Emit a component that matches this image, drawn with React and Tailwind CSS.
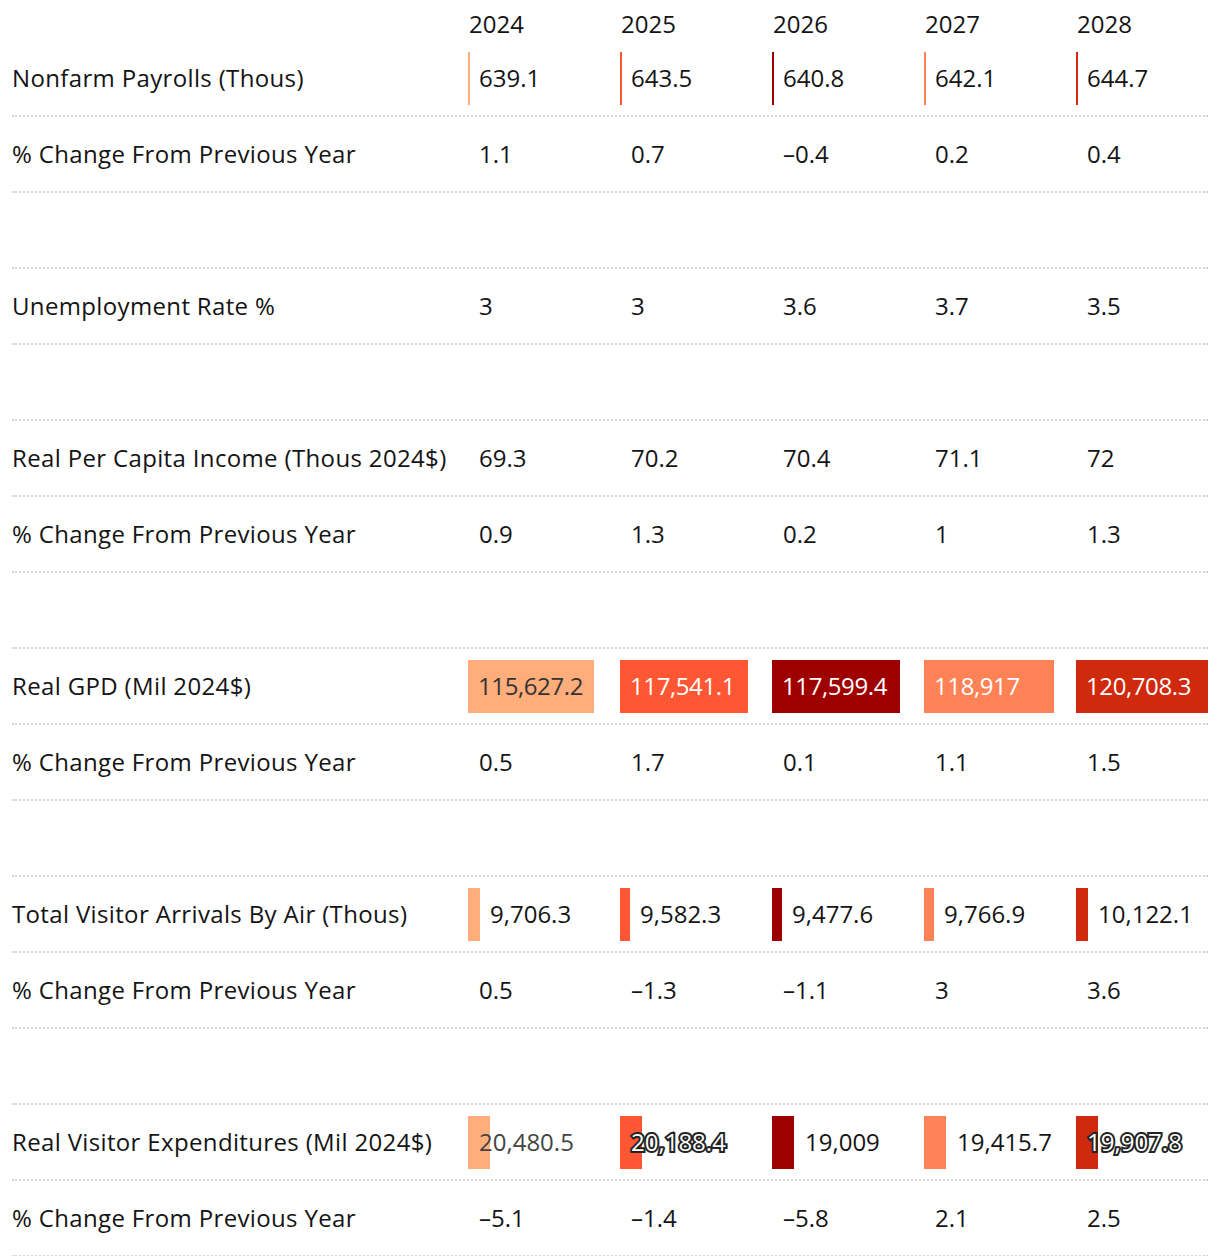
import React from 'react'

const YEARS = ['2024', '2025', '2026', '2027', '2028']
const COLORS = ['#ffae7b', '#ff5733', '#9e0000', '#ff8257', '#d02a0e']

// ── Row definitions ──────────────────────────────────────────────────────────
const ROWS = [
  { label: 'Nonfarm Payrolls (Thous)', kind: 'line', values: ['639.1', '643.5', '640.8', '642.1', '644.7'] },
  { label: '% Change From Previous Year', kind: 'plain', values: ['1.1', '0.7', '–0.4', '0.2', '0.4'] },
  { kind: 'blank' },
  { label: 'Unemployment Rate %', kind: 'plain', values: ['3', '3', '3.6', '3.7', '3.5'] },
  { kind: 'blank' },
  { label: 'Real Per Capita Income (Thous 2024$)', kind: 'plain', values: ['69.3', '70.2', '70.4', '71.1', '72'] },
  { label: '% Change From Previous Year', kind: 'plain', values: ['0.9', '1.3', '0.2', '1', '1.3'] },
  { kind: 'blank' },
  { label: 'Real GPD (Mil 2024$)', kind: 'box', values: ['115,627.2', '117,541.1', '117,599.4', '118,917', '120,708.3'], widths: [126, 128, 128, 130, 132] },
  { label: '% Change From Previous Year', kind: 'plain', values: ['0.5', '1.7', '0.1', '1.1', '1.5'] },
  { kind: 'blank' },
  { label: 'Total Visitor Arrivals By Air (Thous)', kind: 'bar', values: ['9,706.3', '9,582.3', '9,477.6', '9,766.9', '10,122.1'], widths: [12, 10, 10, 10, 12] },
  { label: '% Change From Previous Year', kind: 'plain', values: ['0.5', '–1.3', '–1.1', '3', '3.6'] },
  { kind: 'blank' },
  { label: 'Real Visitor Expenditures (Mil 2024$)', kind: 'overlay', values: ['20,480.5', '20,188.4', '19,009', '19,415.7', '19,907.8'] },
  { label: '% Change From Previous Year', kind: 'plain', values: ['–5.1', '–1.4', '–5.8', '2.1', '2.5'] },
]

const GRID = 'grid grid-cols-[456px_152px_152px_152px_152px_132px]'

const Cell = ({ kind, value, i, width }) => {
  const color = COLORS[i]

  if (kind === 'line') {
    return (
      <div className="flex items-center h-[53px]">
        <span className="w-[2px] h-full shrink-0" style={{ background: color }} />
        <span className="ml-[9px]">{value}</span>
      </div>
    )
  }

  if (kind === 'box') {
    return (
      <div
        className={`flex items-center h-[53px] pl-[10px] whitespace-nowrap tracking-[-0.4px] ${i === 0 ? 'text-[#333]' : 'text-white'}`}
        style={{ background: color, width }}
      >
        {value}
      </div>
    )
  }

  if (kind === 'bar') {
    return (
      <div className="flex items-center h-[53px]">
        <span className="h-full shrink-0" style={{ background: color, width }} />
        <span className="ml-[10px]">{value}</span>
      </div>
    )
  }

  if (kind === 'overlay') {
    // label sits on the bar for some years, after it for others
    const inside = i === 0 || i === 1 || i === 4
    return (
      <div className="relative flex items-center h-[53px]">
        <span className="w-[22px] h-full shrink-0" style={{ background: color }} />
        {inside ? (
          <span
            className={`absolute left-[11px] whitespace-nowrap ${
              i === 0
                ? 'text-[#444]'
                : 'text-white [-webkit-text-stroke:4px_#262626] [paint-order:stroke_fill] [text-shadow:0_0_3px_rgba(0,0,0,0.4)]'
            }`}
          >
            {value}
          </span>
        ) : (
          <span className="ml-[11px]">{value}</span>
        )}
      </div>
    )
  }

  return <div className="pl-[11px]">{value}</div>
}

const Row = ({ row }) => (
  <div className={`${GRID} h-[76px] items-center border-b-2 border-dotted border-[#d4d4d4]`}>
    {row.kind === 'blank' ? null : (
      <>
        <div className="whitespace-nowrap tracking-[0.35px]">{row.label}</div>
        {row.values.map((v, i) => (
          <Cell key={i} kind={row.kind} value={v} i={i} width={row.widths?.[i]} />
        ))}
      </>
    )}
  </div>
)

export default function App() {
  return (
    <div className="w-[1220px] bg-white text-[#141414] text-[24px] leading-[28px] font-['Open_Sans',_'Liberation_Sans',_sans-serif]">
      <div className="ml-3 w-[1196px]">
        <div className={`${GRID} h-[41px] pt-[10px]`}>
          <div />
          {YEARS.map((y) => (
            <div key={y} className="pl-[1px]">{y}</div>
          ))}
        </div>
        {ROWS.map((row, idx) => (
          <Row key={idx} row={row} />
        ))}
      </div>
    </div>
  )
}
